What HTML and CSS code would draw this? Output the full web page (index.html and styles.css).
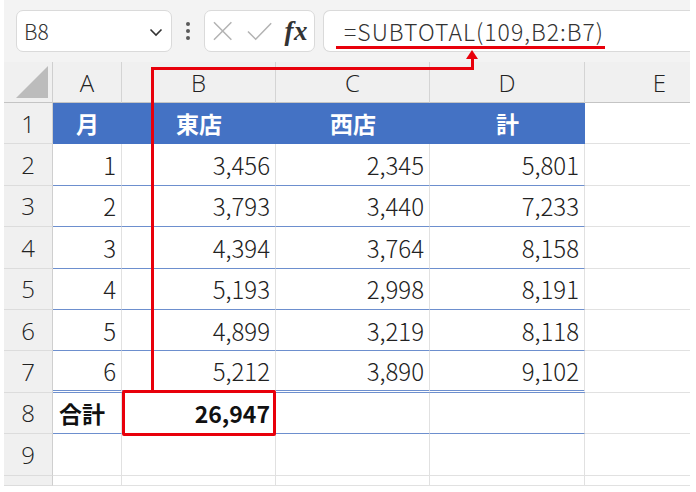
FILE: index.html
```html
<!DOCTYPE html>
<html lang="ja">
<head>
<meta charset="utf-8">
<link rel="stylesheet" href="styles.css">
</head>
<body>
<div class="sheet">
  <div class="toolbar">
    <div class="namebox"><span class="ref">B8</span>
      <svg class="chev" width="14" height="9" viewBox="0 0 14 9"><path d="M1.5 1.5 L7 7 L12.5 1.5" fill="none" stroke="#333" stroke-width="1.6"/></svg>
    </div>
    <div class="dots"><i></i><i></i><i></i></div>
    <div class="fxbox">
      <svg width="20" height="20" viewBox="0 0 20 20"><path d="M1 1 L19 19 M19 1 L1 19" stroke="#b3b3b3" stroke-width="1.6" fill="none"/></svg>
      <svg width="26" height="19" viewBox="0 0 26 19"><path d="M1 9.5 L9 17.5 L25 1" stroke="#b3b3b3" stroke-width="1.6" fill="none"/></svg>
      <span class="fx">fx</span>
    </div>
    <div class="formula"><span class="ftext">=SUBTOTAL(109,B2:B7)</span></div>
  </div>
  <div class="grid">
    <div class="corner"><svg width="34" height="34" viewBox="0 0 34 34"><path d="M33 1 L33 33 L1 33 Z" fill="#bcbcbc"/></svg></div>
    <div class="ch">A</div><div class="ch">B</div><div class="ch">C</div><div class="ch">D</div><div class="ch">E</div>

    <div class="rh">1</div>
    <div class="c th">月</div><div class="c th">東店</div><div class="c th">西店</div><div class="c th">計</div><div class="c">&nbsp;</div>

    <div class="rh">2</div>
    <div class="c t num">1</div><div class="c t num">3,456</div><div class="c t num">2,345</div><div class="c t num">5,801</div><div class="c"></div>
    <div class="rh">3</div>
    <div class="c t num">2</div><div class="c t num">3,793</div><div class="c t num">3,440</div><div class="c t num">7,233</div><div class="c"></div>
    <div class="rh">4</div>
    <div class="c t num">3</div><div class="c t num">4,394</div><div class="c t num">3,764</div><div class="c t num">8,158</div><div class="c"></div>
    <div class="rh">5</div>
    <div class="c t num">4</div><div class="c t num">5,193</div><div class="c t num">2,998</div><div class="c t num">8,191</div><div class="c"></div>
    <div class="rh">6</div>
    <div class="c t num">5</div><div class="c t num">4,899</div><div class="c t num">3,219</div><div class="c t num">8,118</div><div class="c"></div>
    <div class="rh">7</div>
    <div class="c t last num">6</div><div class="c t last num">5,212</div><div class="c t last num">3,890</div><div class="c t last num">9,102</div><div class="c"></div>

    <div class="rh">8</div>
    <div class="c t bold">合計</div><div class="c t num bold">26,947</div><div class="c t"></div><div class="c t"></div><div class="c"></div>

    <div class="rh">9</div>
    <div class="c"></div><div class="c"></div><div class="c"></div><div class="c"></div><div class="c"></div>
    <div class="rh"></div>
    <div class="c"></div><div class="c"></div><div class="c"></div><div class="c"></div><div class="c"></div>
  </div>

  <div class="mark underline"></div>
  <div class="mark vline-left"></div>
  <div class="mark hline"></div>
  <div class="mark vline-right"></div>
  <div class="mark arrowhead"></div>
  <div class="mark box"></div>
</div>
</body>
</html>
```
FILE: styles.css
```css
* { box-sizing: border-box; }
html, body { margin: 0; padding: 0; background: #fff; }
body { font-family: "Noto Sans CJK JP", "Noto Sans", sans-serif; color: #222; }

.sheet {
  position: relative;
  width: 686px;
  height: 486px;
  margin-left: 4px;
  overflow: hidden;
  background: #f0f0f0;
}

.toolbar {
  height: 62px;
  display: flex;
  align-items: stretch;
  padding: 10px 0 10px 12px;
  background: #f3f3f3;
}
.namebox {
  width: 156px;
  background: #fff;
  border: 1px solid #dadada;
  border-radius: 7px;
  display: flex;
  align-items: center;
  justify-content: space-between;
  padding: 0 8px 0 7px;
}
.ref { font-size: 21px; color: #333; font-weight: 300; }
.chev { margin-top: 2px; }
.dots {
  width: 32px;
  display: flex;
  flex-direction: column;
  align-items: center;
  justify-content: center;
  gap: 3px;
}
.dots i { display: block; width: 4px; height: 4px; border-radius: 50%; background: #5a5a5a; }
.fxbox {
  width: 111px;
  background: #fff;
  border: 1px solid #dadada;
  border-radius: 7px;
  display: flex;
  align-items: center;
  padding: 0 6px 0 8px;
  gap: 15px;
}
.fx {
  font-family: "Liberation Serif", "DejaVu Serif", serif;
  font-style: italic;
  font-weight: bold;
  font-size: 27px;
  color: #333;
  margin-left: -3px;
  letter-spacing: 0.5px;
  line-height: 1;
}
.formula {
  flex: 1;
  margin-left: 8px;
  background: #fff;
  border: 1px solid #dadada;
  border-right: none;
  border-radius: 7px 0 0 7px;
  display: flex;
  align-items: center;
  padding-left: 20px;
}
.ftext { font-size: 23px; color: #333; font-weight: 300; letter-spacing: 1px; }

.grid {
  display: grid;
  grid-template-columns: 49px 69px 154px 154px 155px 150px;
  grid-template-rows: 41px repeat(9, 41.4px) 1fr;
  height: 424px;
  width: 731px;
  background: #fff;
}
.corner {
  background: #f0f0f0;
  border-right: 1px solid #cfcfcf;
  border-bottom: 1px solid #c4c4c4;
  display: flex;
  align-items: flex-end;
  justify-content: flex-end;
  padding: 0 3px 3px 0;
}
.ch, .rh {
  background: #f0f0f0;
  display: flex;
  align-items: center;
  justify-content: center;
  font-size: 24px;
  color: #222;
  font-weight: 300;
  font-family: "Open Sans", "Noto Sans", sans-serif;
}
.ch {
  border-right: 1px solid #d4d4d4;
  border-bottom: 1px solid #c4c4c4;
}
.rh {
  border-right: 1px solid #cfcfcf;
  border-bottom: 1px solid #dcdcdc;
}
.c {
  border-right: 1px solid #e1e1e1;
  border-bottom: 1px solid #e1e1e1;
  display: flex;
  align-items: center;
  font-size: 24px;
  font-weight: 300;
  color: #222;
  padding: 0 5px 0 6px;
  white-space: nowrap;
}
.th {
  background: #4472c4;
  border-right-color: #4472c4;
  border-bottom-color: #4472c4;
  color: #fff;
  font-weight: bold;
  font-size: 23px;
  justify-content: center;
}
.t { border-bottom-color: #6d8fce; }
.last { border-bottom: 3px double #6d8fce; }
.num { justify-content: flex-end; }
.bold { font-weight: bold; color: #111; font-size: 23px; }

.mark { position: absolute; background: #e8000b; }
.underline { left: 332px; top: 46px; width: 269px; height: 3px; }
.vline-left { left: 147px; top: 67px; width: 3px; height: 325px; }
.hline { left: 147px; top: 67px; width: 323px; height: 3px; }
.vline-right { left: 467px; top: 57px; width: 3px; height: 13px; }
.arrowhead {
  left: 462px; top: 50px;
  background: transparent;
  border-left: 6.5px solid transparent;
  border-right: 6.5px solid transparent;
  border-bottom: 9px solid #e8000b;
  width: 0; height: 0;
}
.box {
  left: 118px; top: 390px; width: 154px; height: 46px;
  background: transparent;
  border: 3px solid #e8000b;
  border-radius: 2px;
}
```
